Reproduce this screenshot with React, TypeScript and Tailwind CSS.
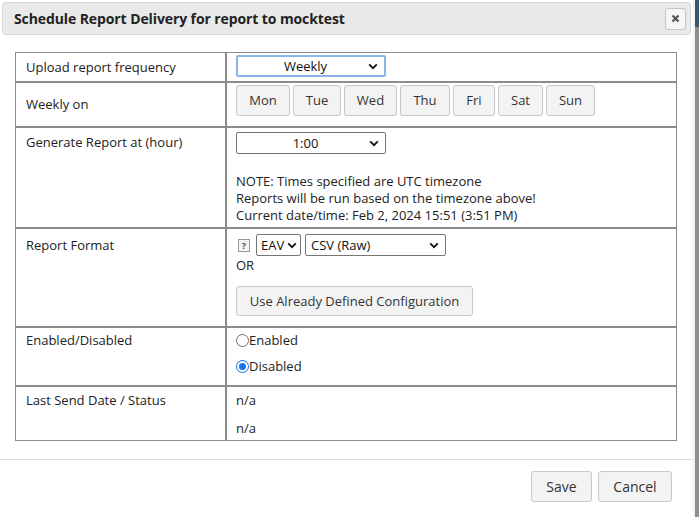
import React from "react";

const font = { fontFamily: '"Open Sans", "Liberation Sans", sans-serif' };

function Chevron() {
  return (
    <svg width="10" height="7" viewBox="0 0 10 7" className="shrink-0">
      <path d="M1.2 1.4 L5 5.2 L8.8 1.4" fill="none" stroke="#111" strokeWidth="1.8" />
    </svg>
  );
}

function Select({ value, className, center, focus }: { value: string; className: string; center?: boolean; focus?: boolean }) {
  return (
    <div
      className={`flex items-center h-[22px] rounded-[2px] bg-white pl-[5px] pr-[6px] text-[13px] text-[#111] ${
        focus ? "border-2 border-[#8ab4e8]" : "border border-[#767676]"
      } ${className}`}
    >
      <span className={`flex-1 ${center ? "text-center" : "text-left"}`}>{value}</span>
      <Chevron />
    </div>
  );
}

function Btn({ children, className }: { children: React.ReactNode; className: string }) {
  return (
    <div className={`flex items-center justify-center rounded-[3px] border border-[#c8c8c8] bg-[#f3f3f3] text-[13px] text-[#333] ${className}`}>
      {children}
    </div>
  );
}

export default function App() {
  const days = [
    ["Mon", "w-[54px]"],
    ["Tue", "w-[48px]"],
    ["Wed", "w-[53px]"],
    ["Thu", "w-[50px]"],
    ["Fri", "w-[42px]"],
    ["Sat", "w-[45px]"],
    ["Sun", "w-[49px]"],
  ];
  const bd = "border-[#8c8c8c]";
  return (
    <div className="flex w-[699px] h-[517px] bg-white overflow-hidden text-[#222]" style={font}>
      <div className="w-[693px] h-full flex flex-col p-[2px] bg-white">
        <div className="flex items-center justify-between h-[33px] rounded-[4px] border border-[#d6d6d6] bg-[#e9e9e9] pl-[11px] pr-[4px]">
          <span className="text-[14px] font-bold text-[#222] tracking-[-0.1px]">Schedule Report Delivery for report to mocktest</span>
          <div className="w-[21px] h-[22px] rounded-[3px] border border-[#c5c5c5] bg-[#f6f6f6] flex items-center justify-center">
            <svg width="9" height="9" viewBox="0 0 9 9">
              <path d="M1.5 1.5 L7.5 7.5 M7.5 1.5 L1.5 7.5" stroke="#555" strokeWidth="2.2" />
            </svg>
          </div>
        </div>

        <div className={`mt-[17px] ml-[13px] w-[662px] border ${bd} text-[13px] leading-[17px]`}>
          {/* Row 1 */}
          <div className={`grid grid-cols-[211px_1fr] h-[30px] border-b-2 ${bd}`}>
            <div className={`border-r-2 ${bd} pl-[10px] flex items-center`}>Upload report frequency</div>
            <div className="pl-[9px] pt-[2px]">
              <Select value="Weekly" className="w-[150px]" center focus />
            </div>
          </div>
          {/* Row 2 */}
          <div className={`grid grid-cols-[211px_1fr] h-[45px] border-b-2 ${bd}`}>
            <div className={`border-r-2 ${bd} pl-[10px] flex items-center`}>Weekly on</div>
            <div className="pl-[9px] pt-[2px] flex gap-[3px]">
              {days.map(([d, w]) => (
                <Btn key={d} className={`${w} h-[31px]`}>
                  {d}
                </Btn>
              ))}
            </div>
          </div>
          {/* Row 3 */}
          <div className={`grid grid-cols-[211px_1fr] h-[101px] border-b-2 ${bd}`}>
            <div className={`border-r-2 ${bd} pl-[10px] pt-[6px]`}>Generate Report at (hour)</div>
            <div className="pl-[9px] pt-[4px] flex flex-col">
              <Select value="1:00" className="w-[150px]" center />
              <div className="mt-[19px]">NOTE: Times specified are UTC timezone</div>
              <div>Reports will be run based on the timezone above!</div>
              <div>Current date/time: Feb 2, 2024 15:51 (3:51 PM)</div>
            </div>
          </div>
          {/* Row 4 */}
          <div className={`grid grid-cols-[211px_1fr] h-[99px] border-b-2 ${bd}`}>
            <div className={`border-r-2 ${bd} pl-[10px] pt-[8px]`}>Report Format</div>
            <div className="pl-[9px] pt-[5px] flex flex-col">
              <div className="flex items-center">
                <div className="ml-[2px] w-[12px] h-[13px] border border-[#9a9a9a] bg-[#f4f4f4] flex items-center justify-center text-[9px] font-bold text-[#555] leading-none">
                  ?
                </div>
                <Select value="EAV" className="ml-[6px] w-[45px] !pl-[4px] !pr-[3px]" />
                <Select value="CSV (Raw)" className="ml-[4px] w-[141px]" />
              </div>
              <div className="mt-[1px]">OR</div>
              <Btn className="mt-[12px] w-[237px] h-[30px]">Use Already Defined Configuration</Btn>
            </div>
          </div>
          {/* Row 5 */}
          <div className={`grid grid-cols-[211px_1fr] h-[59px] border-b-2 ${bd}`}>
            <div className={`border-r-2 ${bd} pl-[10px] pt-[4px]`}>Enabled/Disabled</div>
            <div className="pl-[9px] pt-[4px] flex flex-col gap-[9px]">
              <div className="flex items-center">
                <span className="w-[13px] h-[13px] rounded-full border border-[#6e6e6e] bg-white" />
                <span>Enabled</span>
              </div>
              <div className="flex items-center">
                <span className="w-[13px] h-[13px] rounded-full bg-[#1a73e8] flex items-center justify-center">
                  <span className="w-[11px] h-[11px] rounded-full border-2 border-white bg-[#1a73e8]" />
                </span>
                <span>Disabled</span>
              </div>
            </div>
          </div>
          {/* Row 6 */}
          <div className="grid grid-cols-[211px_1fr] h-[53px]">
            <div className={`border-r-2 ${bd} pl-[10px] pt-[5px]`}>Last Send Date / Status</div>
            <div className="pl-[9px] pt-[5px] flex flex-col gap-[11px]">
              <div>n/a</div>
              <div>n/a</div>
            </div>
          </div>
        </div>

        <div className="mt-[18px] -mx-[2px] border-t border-[#dcdcdc]" />
        <div className="flex justify-end gap-[6px] pr-[19px] mt-[11px]">
          <Btn className="w-[61px] h-[31px] text-[14px]">Save</Btn>
          <Btn className="w-[74px] h-[31px] text-[14px]">Cancel</Btn>
        </div>
      </div>
      <div className="w-[2px] h-full bg-[#f2f2f2]" />
      <div className="w-[4px] h-full flex flex-col">
        <div className="h-[27px] bg-[#3c5573]" />
        <div className="flex-1 bg-[#8e8e8e]" />
      </div>
    </div>
  );
}
